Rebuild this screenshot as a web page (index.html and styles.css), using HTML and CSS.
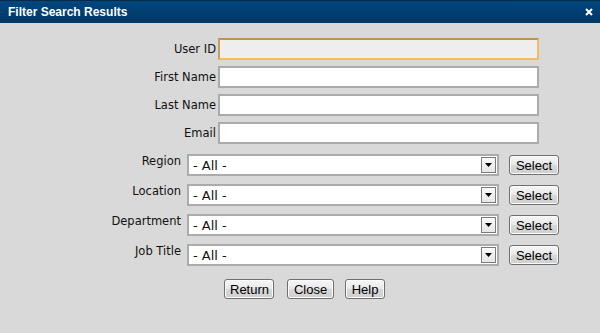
FILE: index.html
```html
<!DOCTYPE html>
<html lang="en">
<head>
  <meta charset="UTF-8" />
  <title>Filter Search Results</title>
  <link rel="stylesheet" href="styles.css">
</head>
<body>
  <div class="dialog">
    <div class="titlebar">
      <span class="title">Filter Search Results</span>
      <svg class="close-x" width="8" height="8" viewBox="0 0 8 8"><path d="M1 1L7 7M7 1L1 7" stroke="#fff" stroke-width="2"/></svg>
    </div>

    <div class="form">
      <div class="text-fields">
        <label for="userId">User ID</label>
        <input type="text" id="userId" class="field field-readonly" />
        <label for="firstName">First Name</label>
        <input type="text" id="firstName" class="field" />
        <label for="lastName">Last Name</label>
        <input type="text" id="lastName" class="field" />
        <label for="email">Email</label>
        <input type="text" id="email" class="field" />
      </div>

      <div class="select-fields">
        <label>Region</label>
        <div class="dropdown">
          <span class="dropdown-value">- All -</span>
          <span class="dropdown-arrow"><svg width="7" height="4" viewBox="0 0 7 4"><path d="M0 0h7L3.5 4z" fill="#000"/></svg></span>
        </div>
        <button class="btn">Select</button>

        <label>Location</label>
        <div class="dropdown">
          <span class="dropdown-value">- All -</span>
          <span class="dropdown-arrow"><svg width="7" height="4" viewBox="0 0 7 4"><path d="M0 0h7L3.5 4z" fill="#000"/></svg></span>
        </div>
        <button class="btn">Select</button>

        <label>Department</label>
        <div class="dropdown">
          <span class="dropdown-value">- All -</span>
          <span class="dropdown-arrow"><svg width="7" height="4" viewBox="0 0 7 4"><path d="M0 0h7L3.5 4z" fill="#000"/></svg></span>
        </div>
        <button class="btn">Select</button>

        <label>Job Title</label>
        <div class="dropdown">
          <span class="dropdown-value">- All -</span>
          <span class="dropdown-arrow"><svg width="7" height="4" viewBox="0 0 7 4"><path d="M0 0h7L3.5 4z" fill="#000"/></svg></span>
        </div>
        <button class="btn">Select</button>
      </div>

      <div class="actions">
        <button class="btn btn-return">Return</button>
        <button class="btn btn-close">Close</button>
        <button class="btn btn-help">Help</button>
      </div>
    </div>
  </div>
</body>
</html>
```

FILE: styles.css
```css
html, body {
  margin: 0;
  height: 100%;
  background-color: #d9d9d9;
}
body {
  font-family: 'DejaVu Sans', Tahoma, sans-serif;
  font-size: 11.5px;
  color: #111;
}
.titlebar {
  height: 23px;
  display: flex;
  align-items: center;
  justify-content: space-between;
  padding: 0 7px 1px 8px;
  box-sizing: border-box;
  background: linear-gradient(#00467f, #003764);
  border-top: 1px solid #0b2a45;
  color: #fff;
}
.title {
  font-family: 'Liberation Sans', Arial, sans-serif;
  font-weight: bold;
  font-size: 12px;
}
.close-x {
  display: block;
}
.text-fields {
  display: grid;
  grid-template-columns: 216px 321px;
  column-gap: 2px;
  row-gap: 6px;
  align-items: center;
  margin-top: 15px;
}
.text-fields label {
  text-align: right;
}
.field {
  height: 22px;
  box-sizing: border-box;
  border: 2px solid #ababab;
  background-color: #fff;
  margin: 0;
  padding: 2px 4px;
}
.field-readonly {
  background-color: #eeeeee;
  border-color: #c09448 #efbd62 #efbd62 #c8a050;
}
.select-fields {
  display: grid;
  grid-template-columns: 181px 312px 50px;
  column-gap: 6px;
  row-gap: 8px;
  align-items: start;
  margin-top: 10px;
}
.select-fields label {
  text-align: right;
  padding-top: 0;
}
.select-fields .btn {
  width: 50px;
  margin-left: 4px;
  margin-top: 1px;
}
.dropdown {
  height: 22px;
  box-sizing: border-box;
  border: 2px solid #ababab;
  background-color: #fff;
  display: flex;
  align-items: center;
  justify-content: space-between;
  width: 312px;
}
.dropdown-value {
  font-size: 13px;
  padding-left: 4px;
  padding-top: 1px;
}
.dropdown-arrow {
  width: 13px;
  height: 14px;
  margin-right: 1px;
  border: 1px solid #7a7a7a;
  background: linear-gradient(#fafafa, #e6e6e6);
  display: flex;
  align-items: center;
  justify-content: center;
}
.btn {
  font-family: 'Liberation Sans', Arial, sans-serif;
  font-size: 13px;
  color: #000;
  height: 20px;
  padding: 0 5px;
  border: 1px solid #707070;
  border-radius: 3px;
  background: linear-gradient(#f6f6f6 0%, #e8e8e8 50%, #d8d8d8 51%, #cfcfcf 100%);
  box-shadow: inset 0 0 0 1px #fbfbfb;
  cursor: pointer;
}
.actions {
  display: flex;
  justify-content: center;
  margin-top: 13px;
  padding-left: 9px;
}
.btn-return { width: 50px; margin-right: 13px; }
.btn-close { width: 47px; margin-right: 11px; }
.btn-help { width: 40px; }
```
